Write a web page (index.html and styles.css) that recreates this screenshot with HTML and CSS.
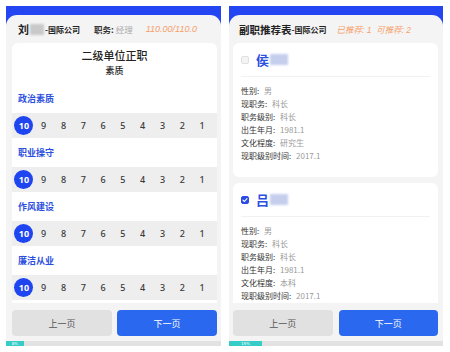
FILE: index.html
```html
<!DOCTYPE html>
<html lang="zh">
<head>
<meta charset="utf-8">
<link rel="stylesheet" href="styles.css">
</head>
<body>
<div class="screens">
  <section class="phone phone-left">
    <div class="sheet">
      <div class="head">
        <span class="who">刘<span class="blur gray"></span><small>-国际公司</small></span>
        <span class="duty">职务: <em>经理</em></span>
        <span class="score">110.00/110.0</span>
      </div>
      <div class="scroll card">
        <div class="title">二级单位正职</div>
        <div class="subtitle">素质</div>
        <div class="label">政治素质</div>
        <div class="rate"><span class="on">10</span><span>9</span><span>8</span><span>7</span><span>6</span><span>5</span><span>4</span><span>3</span><span>2</span><span>1</span></div>
        <div class="label">职业操守</div>
        <div class="rate"><span class="on">10</span><span>9</span><span>8</span><span>7</span><span>6</span><span>5</span><span>4</span><span>3</span><span>2</span><span>1</span></div>
        <div class="label">作风建设</div>
        <div class="rate"><span class="on">10</span><span>9</span><span>8</span><span>7</span><span>6</span><span>5</span><span>4</span><span>3</span><span>2</span><span>1</span></div>
        <div class="label">廉洁从业</div>
        <div class="rate"><span class="on">10</span><span>9</span><span>8</span><span>7</span><span>6</span><span>5</span><span>4</span><span>3</span><span>2</span><span>1</span></div>
      </div>
      <div class="btns">
        <button class="btn prev">上一页</button>
        <button class="btn next">下一页</button>
      </div>
    </div>
    <div class="progress"><div class="fill" style="width:18px">8%</div></div>
  </section>

  <section class="phone phone-right">
    <div class="sheet">
      <div class="head head-r">
        <span class="who big">副职推荐表<small>-国际公司</small></span>
        <span class="score">已推荐: 1 &nbsp;可推荐: 2</span>
      </div>
      <div class="scroll list">
        <div class="person">
          <div class="p-head">
            <span class="cb"></span>
            <span class="pname">侯<span class="blur blue"></span></span>
          </div>
          <div class="fields">
            <div>性别: <em>男</em></div>
            <div>现职务: <em>科长</em></div>
            <div>职务级别: <em>科长</em></div>
            <div>出生年月: <em>1981.1</em></div>
            <div>文化程度: <em>研究生</em></div>
            <div>现职级别时间: <em>2017.1</em></div>
          </div>
        </div>
        <div class="person">
          <div class="p-head">
            <span class="cb checked"><svg viewBox="0 0 8 8" width="8" height="8"><path d="M2 4.2 L3.4 5.5 L6 2.6" fill="none" stroke="#fff" stroke-width="1.1" stroke-linecap="round" stroke-linejoin="round"/></svg></span>
            <span class="pname">吕<span class="blur blue"></span></span>
          </div>
          <div class="fields">
            <div>性别: <em>男</em></div>
            <div>现职务: <em>科长</em></div>
            <div>职务级别: <em>科长</em></div>
            <div>出生年月: <em>1981.1</em></div>
            <div>文化程度: <em>本科</em></div>
            <div>现职级别时间: <em>2017.1</em></div>
          </div>
        </div>
      </div>
      <div class="btns">
        <button class="btn prev">上一页</button>
        <button class="btn next">下一页</button>
      </div>
    </div>
    <div class="progress"><div class="fill" style="width:33px">15%</div></div>
  </section>
</div>
</body>
</html>
```

FILE: styles.css
```css
* { box-sizing: border-box; }
html, body { margin: 0; padding: 0; background: #fff; }
body {
  width: 450px;
  height: 352px;
  overflow: hidden;
  font-family: "Noto Sans CJK SC", "Noto Sans", sans-serif;
  color: #333;
}
.screens {
  display: flex;
  gap: 8px;
  padding: 6px 0 0 6px;
}
.phone {
  height: 340px;
  background: #2346f2;
  display: flex;
  flex-direction: column;
}
.phone-left { width: 215px; }
.phone-right { width: 214px; }
.sheet {
  margin-top: 9px;
  flex: 1;
  background: #f4f4f4;
  border-radius: 11px 11px 0 0;
  display: flex;
  flex-direction: column;
}
.phone-left .sheet { padding: 0 4px 0 6px; }
.phone-right .sheet { padding: 0 5px 0 4px; }

.head {
  height: 28px;
  display: flex;
  align-items: center;
  padding-left: 6px;
  font-size: 9px;
  white-space: nowrap;
}
.who {
  font-size: 11px;
  font-weight: 700;
  color: #222;
  display: flex;
  align-items: center;
}
.who.big { font-size: 10.5px; }
.who small { font-size: 8px; font-weight: 700; }
.blur {
  display: inline-block;
  height: 11px;
  filter: blur(1.2px);
}
.blur.gray { width: 14px; background: #c9c9c9; margin: 0 1px; }
.blur.blue { width: 18px; background: #c6ceee; margin-left: 1px; }
.duty { margin-left: 14px; font-weight: 700; font-size: 8.5px; color: #333; }
.duty em { font-style: normal; font-weight: 400; color: #aaa; }
.score {
  margin-left: 13px;
  font-style: italic;
  font-size: 9px;
  color: #f6a06a;
  font-family: "Liberation Sans", "Noto Sans CJK SC", sans-serif;
}
.head-r .score { font-size: 8.5px; margin-left: 10px; }

.scroll {
  height: 260px;
  overflow: hidden;
}
.card {
  background: #fff;
  border-radius: 6px 6px 0 0;
  padding-top: 5px;
}
.title {
  height: 14px;
  line-height: 14px;
  text-align: center;
  font-size: 11px;
  font-weight: 500;
  color: #222;
}
.subtitle {
  margin-top: 3px;
  height: 12px;
  line-height: 12px;
  text-align: center;
  font-size: 9px;
  font-weight: 500;
  color: #222;
  margin-bottom: 7px;
}
.label {
  height: 29px;
  padding: 8px 0 0 6px;
  line-height: 14px;
  font-size: 9px;
  font-weight: 700;
  color: #2b4fde;
}
.rate {
  height: 25px;
  background: #eeeeee;
  display: grid;
  grid-template-columns: repeat(10, 19.8px);
  align-items: center;
  padding-left: 2px;
}
.rate span {
  justify-self: center;
  font-size: 9px;
  font-weight: 500;
  color: #3a3a3a;
  font-family: "Noto Sans", sans-serif;
}
.rate span.on {
  width: 19px;
  height: 19px;
  border-radius: 50%;
  background: #1f45f1;
  color: #fff;
  display: flex;
  align-items: center;
  justify-content: center;
  font-weight: 700;
}

.list {
  display: flex;
  flex-direction: column;
  gap: 6px;
}
.person {
  flex-shrink: 0;
  background: #fff;
  border-radius: 6px;
  padding: 0 8px 15px;
}
.p-head {
  height: 34px;
  display: flex;
  align-items: center;
  border-bottom: 1px solid #f1f1f1;
}
.cb {
  width: 8px;
  height: 8px;
  border-radius: 2px;
  border: 1px solid #e0e0e0;
  background: #f4f4f4;
  display: flex;
}
.cb.checked { background: #2b4de6; border-color: #2b4de6; align-items: center; justify-content: center; }
.cb.checked svg { flex-shrink: 0; }
.pname {
  margin-left: 7px;
  font-size: 13px;
  font-weight: 700;
  color: #2b4fde;
  display: flex;
  align-items: center;
}
.fields {
  padding-top: 7px;
  font-size: 8px;
  color: #333;
}
.fields div { height: 13px; line-height: 13px; }
.fields em { font-style: normal; color: #9a9a9a; margin-left: 3px; }

.btns {
  display: flex;
  gap: 5px;
  margin-top: 7px;
  height: 26px;
}
.phone-right .btns { gap: 6px; }
.btn {
  flex: 1;
  border: none;
  border-radius: 4px;
  font-family: inherit;
  font-size: 9px;
  padding: 0;
}
.prev { background: #e1e1e1; color: #555; }
.next { background: #2a69ef; color: #fff; }

.progress {
  height: 5px;
  background: #e2e2e2;
  display: flex;
}
.fill {
  height: 5px;
  background: #36cdc8;
  color: #fff;
  font-size: 4px;
  line-height: 5px;
  text-align: center;
  font-family: "DejaVu Sans", sans-serif;
}
```
